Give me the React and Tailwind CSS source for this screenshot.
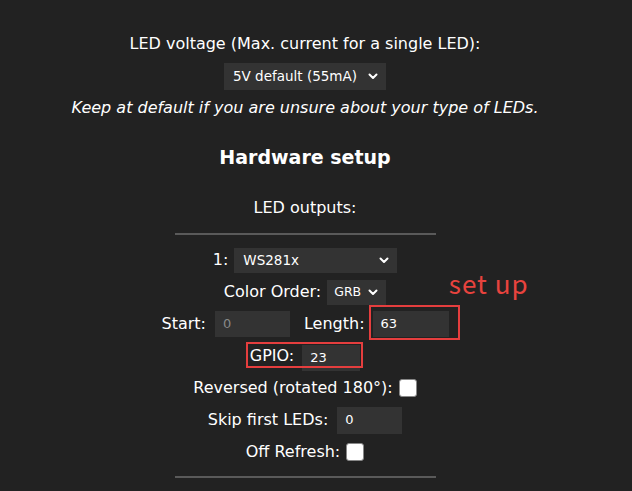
import React from "react";

const font = { fontFamily: '"DejaVu Sans", Verdana, sans-serif' };

function Chevron() {
  return (
    <svg width="10" height="7" viewBox="0 0 10 7" className="shrink-0">
      <path d="M1.5 1.5 5 5l3.5-3.5" fill="none" stroke="#fff" strokeWidth="2" strokeLinecap="round" strokeLinejoin="round" />
    </svg>
  );
}

function Select({ value, className, small }) {
  return (
    <div
      className={`flex items-center justify-between bg-[#333] text-white ${
        small ? "text-[12.5px] pl-[7px] pr-[8px]" : "text-[13.5px] pl-[9px] pr-[8px]"
      } ${className}`}
    >
      <span>{value}</span>
      <Chevron />
    </div>
  );
}

function Field({ value, className, muted }) {
  return (
    <div className={`flex items-center bg-[#333] text-[13px] pl-[8px] ${muted ? "text-[#888]" : "text-white"} ${className}`}>
      {value}
    </div>
  );
}

function Check() {
  return <div className="w-[18px] h-[18px] rounded-[3px] bg-white border border-[#888]" />;
}

export default function App() {
  return (
    <div className="min-h-screen bg-[#222] text-white text-[16px] leading-8" style={font}>
      <div className="w-[610px] flex flex-col items-center pt-[28px]">
        <div className="h-8">LED voltage (Max. current for a single LED):</div>
        <div className="h-8 flex items-center">
          <Select value="5V default (55mA)" className="w-[162px] h-[27px]" />
        </div>
        <div className="h-8 italic">Keep at default if you are unsure about your type of LEDs.</div>

        <h3 className="mt-[16px] mb-[18px] h-[34px] leading-[34px] text-[19px] font-bold">Hardware setup</h3>

        <div className="h-8">LED outputs:</div>
        <hr className="w-[261px] mt-[9px] mb-[9px] border-0 border-t-[2px] border-[#5a5a5a]" />

        <div className="h-8 flex items-center gap-[6px]">
          <span>1:</span>
          <Select value="WS281x" className="w-[163px] h-[25px]" />
        </div>

        <div className="h-8 flex items-center gap-[6px] relative">
          <span>Color Order:</span>
          <Select value="GRB" small className="w-[59px] h-[25px]" />
          {/* annotation */}
          <span
            className="absolute left-[225px] top-[-6px] text-[26px] leading-none tracking-[1px] text-[#e8433e] whitespace-nowrap"
            style={{ fontFamily: '"Noto Sans CJK SC", "Noto Sans", sans-serif' }}
          >
            set up
          </span>
        </div>

        <div className="h-8 flex items-center">
          <span>Start:</span>
          <Field value="0" muted className="w-[75px] h-[26px] ml-[9px]" />
          <span className="ml-[14px]">Length:</span>
          <div className="relative ml-[8px]">
            <Field value="63" className="w-[76px] h-[26px]" />
            <div className="absolute left-[-4px] top-[-6px] w-[91px] h-[35px] border-2 border-[#e53e3e]" />
          </div>
        </div>

        <div className="h-8 flex items-center relative">
          <span>GPIO:</span>
          <Field value="23" className="w-[58px] h-[26px] ml-[8px] mt-[4px]" />
          <div className="absolute left-[-4px] top-[2px] w-[117px] h-[26px] border-2 border-[#e53e3e]" />
        </div>

        <div className="h-8 flex items-center gap-[6px]">
          <span>Reversed (rotated 180°):</span>
          <Check />
        </div>

        <div className="h-8 flex items-center gap-[9px]">
          <span>Skip first LEDs:</span>
          <Field value="0" className="w-[65px] h-[27px]" />
        </div>

        <div className="h-8 flex items-center gap-[6px]">
          <span>Off Refresh:</span>
          <Check />
        </div>

        <hr className="w-[261px] mt-[8px] border-0 border-t-[2px] border-[#5a5a5a]" />
      </div>
    </div>
  );
}
